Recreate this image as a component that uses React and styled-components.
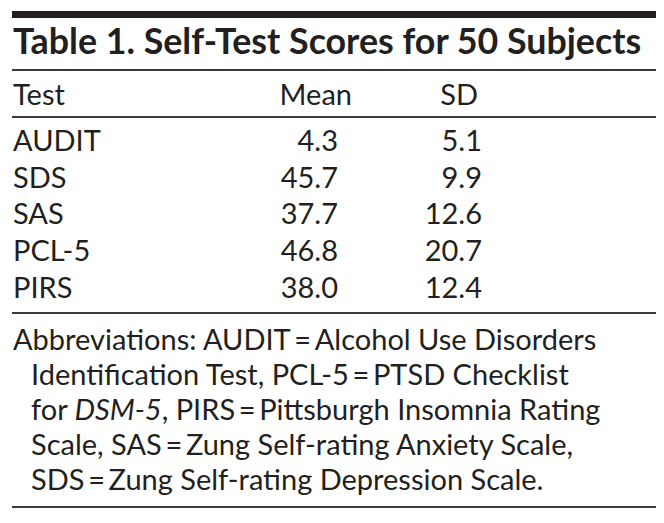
import React from 'react';
import styled, { createGlobalStyle } from 'styled-components';

const GlobalStyle = createGlobalStyle`
  body {
    margin: 0;
    background: #ffffff;
    color: #231f20;
    font-family: Lato, "Liberation Sans", sans-serif;
  }
`;

const Page = styled.div`
  width: 644px;
  padding: 11px 8px 0 12px;
`;

const TopBar = styled.div`
  height: 7px;
  background: #231f20;
`;

const Title = styled.h1`
  margin: 0;
  padding: 1px 0 6px 1px;
  font-size: 35.8px;
  font-weight: 700;
  line-height: 44px;
  white-space: nowrap;
  border-bottom: 2px solid #3b3b3b;
`;

const Section = styled.div`
  padding: ${({ $pad }) => $pad};
  border-bottom: 2px solid #3b3b3b;
`;

const Row = styled.div`
  display: grid;
  grid-template-columns: 260px 80px 130px 1fr;
  font-size: 29px;
  line-height: ${({ $lh }) => $lh || '36.7px'};
`;

const Cell = styled.div`
  padding-left: 1px;
  white-space: nowrap;
`;

const NumCell = styled.div`
  text-align: right;
  padding-right: ${({ $inset }) => $inset}px;
  white-space: nowrap;
`;

const Note = styled.div`
  font-size: 29px;
  line-height: 35px;
`;

const NoteLine = styled.div`
  padding-left: ${({ $indent }) => ($indent ? 19 : 1)}px;
  white-space: nowrap;
`;

const rows = [
  { test: 'AUDIT', mean: '4.3', sd: '5.1' },
  { test: 'SDS', mean: '45.7', sd: '9.9' },
  { test: 'SAS', mean: '37.7', sd: '12.6' },
  { test: 'PCL-5', mean: '46.8', sd: '20.7' },
  { test: 'PIRS', mean: '38.0', sd: '12.4' },
];

const eq = '\u2009=\u2009';

export default function App() {
  return (
    <>
      <GlobalStyle />
      <Page>
        <TopBar />
        <Title>Table 1. Self-Test Scores for 50 Subjects</Title>

        <Section $pad="5px 0 4px">
          <Row $lh="36px">
            <Cell>Test</Cell>
            <NumCell $inset={0}>Mean</NumCell>
            <NumCell $inset={4}>SD</NumCell>
            <div />
          </Row>
        </Section>

        <Section $pad="4px 0 6.5px">
          {rows.map(r => (
            <Row key={r.test}>
              <Cell>{r.test}</Cell>
              <NumCell $inset={14}>{r.mean}</NumCell>
              <NumCell $inset={0}>{r.sd}</NumCell>
              <div />
            </Row>
          ))}
        </Section>

        <Section $pad="7px 0 10px">
          <Note>
            <NoteLine>Abbreviations: AUDIT{eq}Alcohol Use Disorders</NoteLine>
            <NoteLine $indent>Identification Test, PCL-5{eq}PTSD Checklist</NoteLine>
            <NoteLine $indent>
              for <i>DSM-5</i>, PIRS{eq}Pittsburgh Insomnia Rating
            </NoteLine>
            <NoteLine $indent>Scale, SAS{eq}Zung Self-rating Anxiety Scale,</NoteLine>
            <NoteLine $indent>SDS{eq}Zung Self-rating Depression Scale.</NoteLine>
          </Note>
        </Section>
      </Page>
    </>
  );
}
